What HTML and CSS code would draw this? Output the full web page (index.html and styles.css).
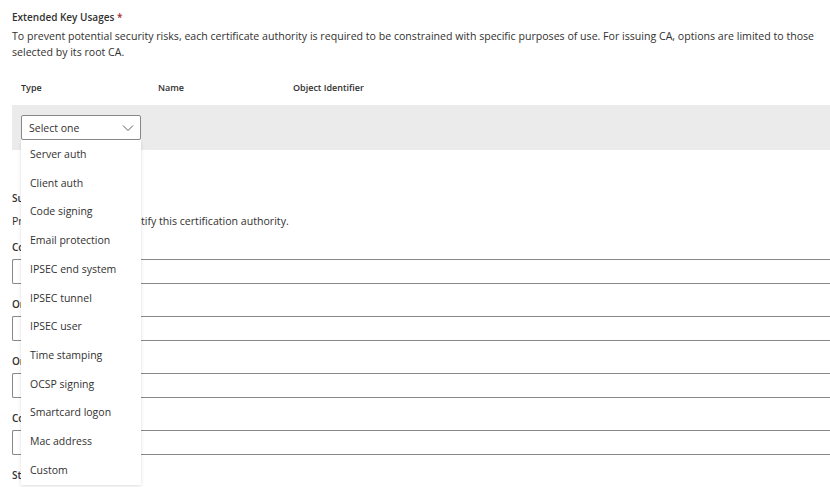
FILE: index.html
```html
<!DOCTYPE html>
<html lang="en">
<head>
    <meta charset="UTF-8">
    <meta name="viewport" content="width=device-width, initial-scale=1.0">
    <title>Extended Key Usages</title>
    <link rel="stylesheet" href="styles.css">
</head>
<body>
    <div class="page">
        <!-- Extended key usages -->
        <section class="eku">
            <h2 class="section-title">Extended Key Usages <span class="required">*</span></h2>
            <p class="section-desc">To prevent potential security risks, each certificate authority is required to be constrained with specific purposes of use. For issuing CA, options are limited to those selected by its root CA.</p>

            <div class="eku-table">
                <div class="eku-head">
                    <span class="col-type">Type</span>
                    <span class="col-name">Name</span>
                    <span class="col-oid">Object Identifier</span>
                </div>
                <div class="eku-row">
                    <div class="select-wrap">
                        <div class="select">
                            <span>Select one</span>
                            <svg class="chevron" width="12" height="8" viewBox="0 0 12 8">
                                <path d="M1 1.5 L6 6.5 L11 1.5" fill="none" stroke="#605e5c" stroke-width="1"/>
                            </svg>
                        </div>
                        <ul class="dropdown">
                            <li>Server auth</li>
                            <li>Client auth</li>
                            <li>Code signing</li>
                            <li>Email protection</li>
                            <li>IPSEC end system</li>
                            <li>IPSEC tunnel</li>
                            <li>IPSEC user</li>
                            <li>Time stamping</li>
                            <li>OCSP signing</li>
                            <li>Smartcard logon</li>
                            <li>Mac address</li>
                            <li>Custom</li>
                        </ul>
                    </div>
                </div>
            </div>
        </section>

        <!-- Subject -->
        <section class="subject">
            <h3 class="section-title">Subject</h3>
            <p class="section-desc">Provide the details to identify this certification authority.</p>

            <div class="field">
                <label>Common name</label>
                <div class="input"></div>
            </div>
            <div class="field">
                <label>Organization</label>
                <div class="input"></div>
            </div>
            <div class="field">
                <label>Organizational unit</label>
                <div class="input"></div>
            </div>
            <div class="field">
                <label>Country/Region</label>
                <div class="input"></div>
            </div>
            <div class="field">
                <label>State or province</label>
                <div class="input"></div>
            </div>
        </section>
    </div>
</body>
</html>
```

FILE: styles.css
```css
* {
    margin: 0;
    padding: 0;
    box-sizing: border-box;
}

html, body {
    width: 830px;
    height: 487px;
    overflow: hidden;
}

body {
    font-family: 'Open Sans', 'Noto Sans', sans-serif;
    font-size: 10px;
    color: #323130;
    background: white;
}

.page {
    width: 900px;
    padding: 9px 0 0 12px;
}

.section-title {
    font-size: 10px;
    font-weight: 600;
    line-height: 16px;
    margin-bottom: 3px;
}

.required {
    color: #a4262c;
}

.section-desc {
    max-width: 806px;
    font-size: 10.6px;
    line-height: 16px;
}

/* table */
.eku-table {
    margin-top: 20px;
}

.eku-head {
    display: flex;
    height: 25px;
    padding-left: 9px;
    font-weight: 600;
    font-size: 9px;
    line-height: 16px;
}

.col-type { width: 137px; }
.col-name { width: 135px; }

.eku-row {
    background: #ebebeb;
    height: 45px;
    padding: 10px 9px;
}

.select-wrap {
    position: relative;
    width: 120px;
}

.select {
    height: 25px;
    border: 1px solid #8a8886;
    border-radius: 2px;
    background: white;
    display: flex;
    align-items: center;
    justify-content: space-between;
    padding: 0 6px 0 7px;
    font-size: 10.5px;
}

.chevron {
    margin-top: 1px;
}

.dropdown {
    position: absolute;
    top: 25px;
    left: 0;
    width: 120px;
    list-style: none;
    background: white;
    box-shadow: 0 1.6px 3.6px rgba(0, 0, 0, 0.13), 0 0.3px 0.9px rgba(0, 0, 0, 0.11);
    z-index: 2;
}

.dropdown li {
    height: 28.73px;
    line-height: 29.5px;
    padding-left: 9px;
    font-size: 10.5px;
}

/* subject */
.subject {
    margin-top: 40px;
}

.subject .section-title {
    margin-bottom: 7px;
}

.subject .section-desc {
    margin-bottom: 10px;
}

.field {
    margin-bottom: 12px;
}

.field label {
    display: block;
    font-weight: 600;
    line-height: 16px;
    margin-bottom: 4px;
}

.input {
    height: 25px;
    border: 1px solid #8a8886;
    border-right: none;
    border-radius: 2px 0 0 2px;
}
```
